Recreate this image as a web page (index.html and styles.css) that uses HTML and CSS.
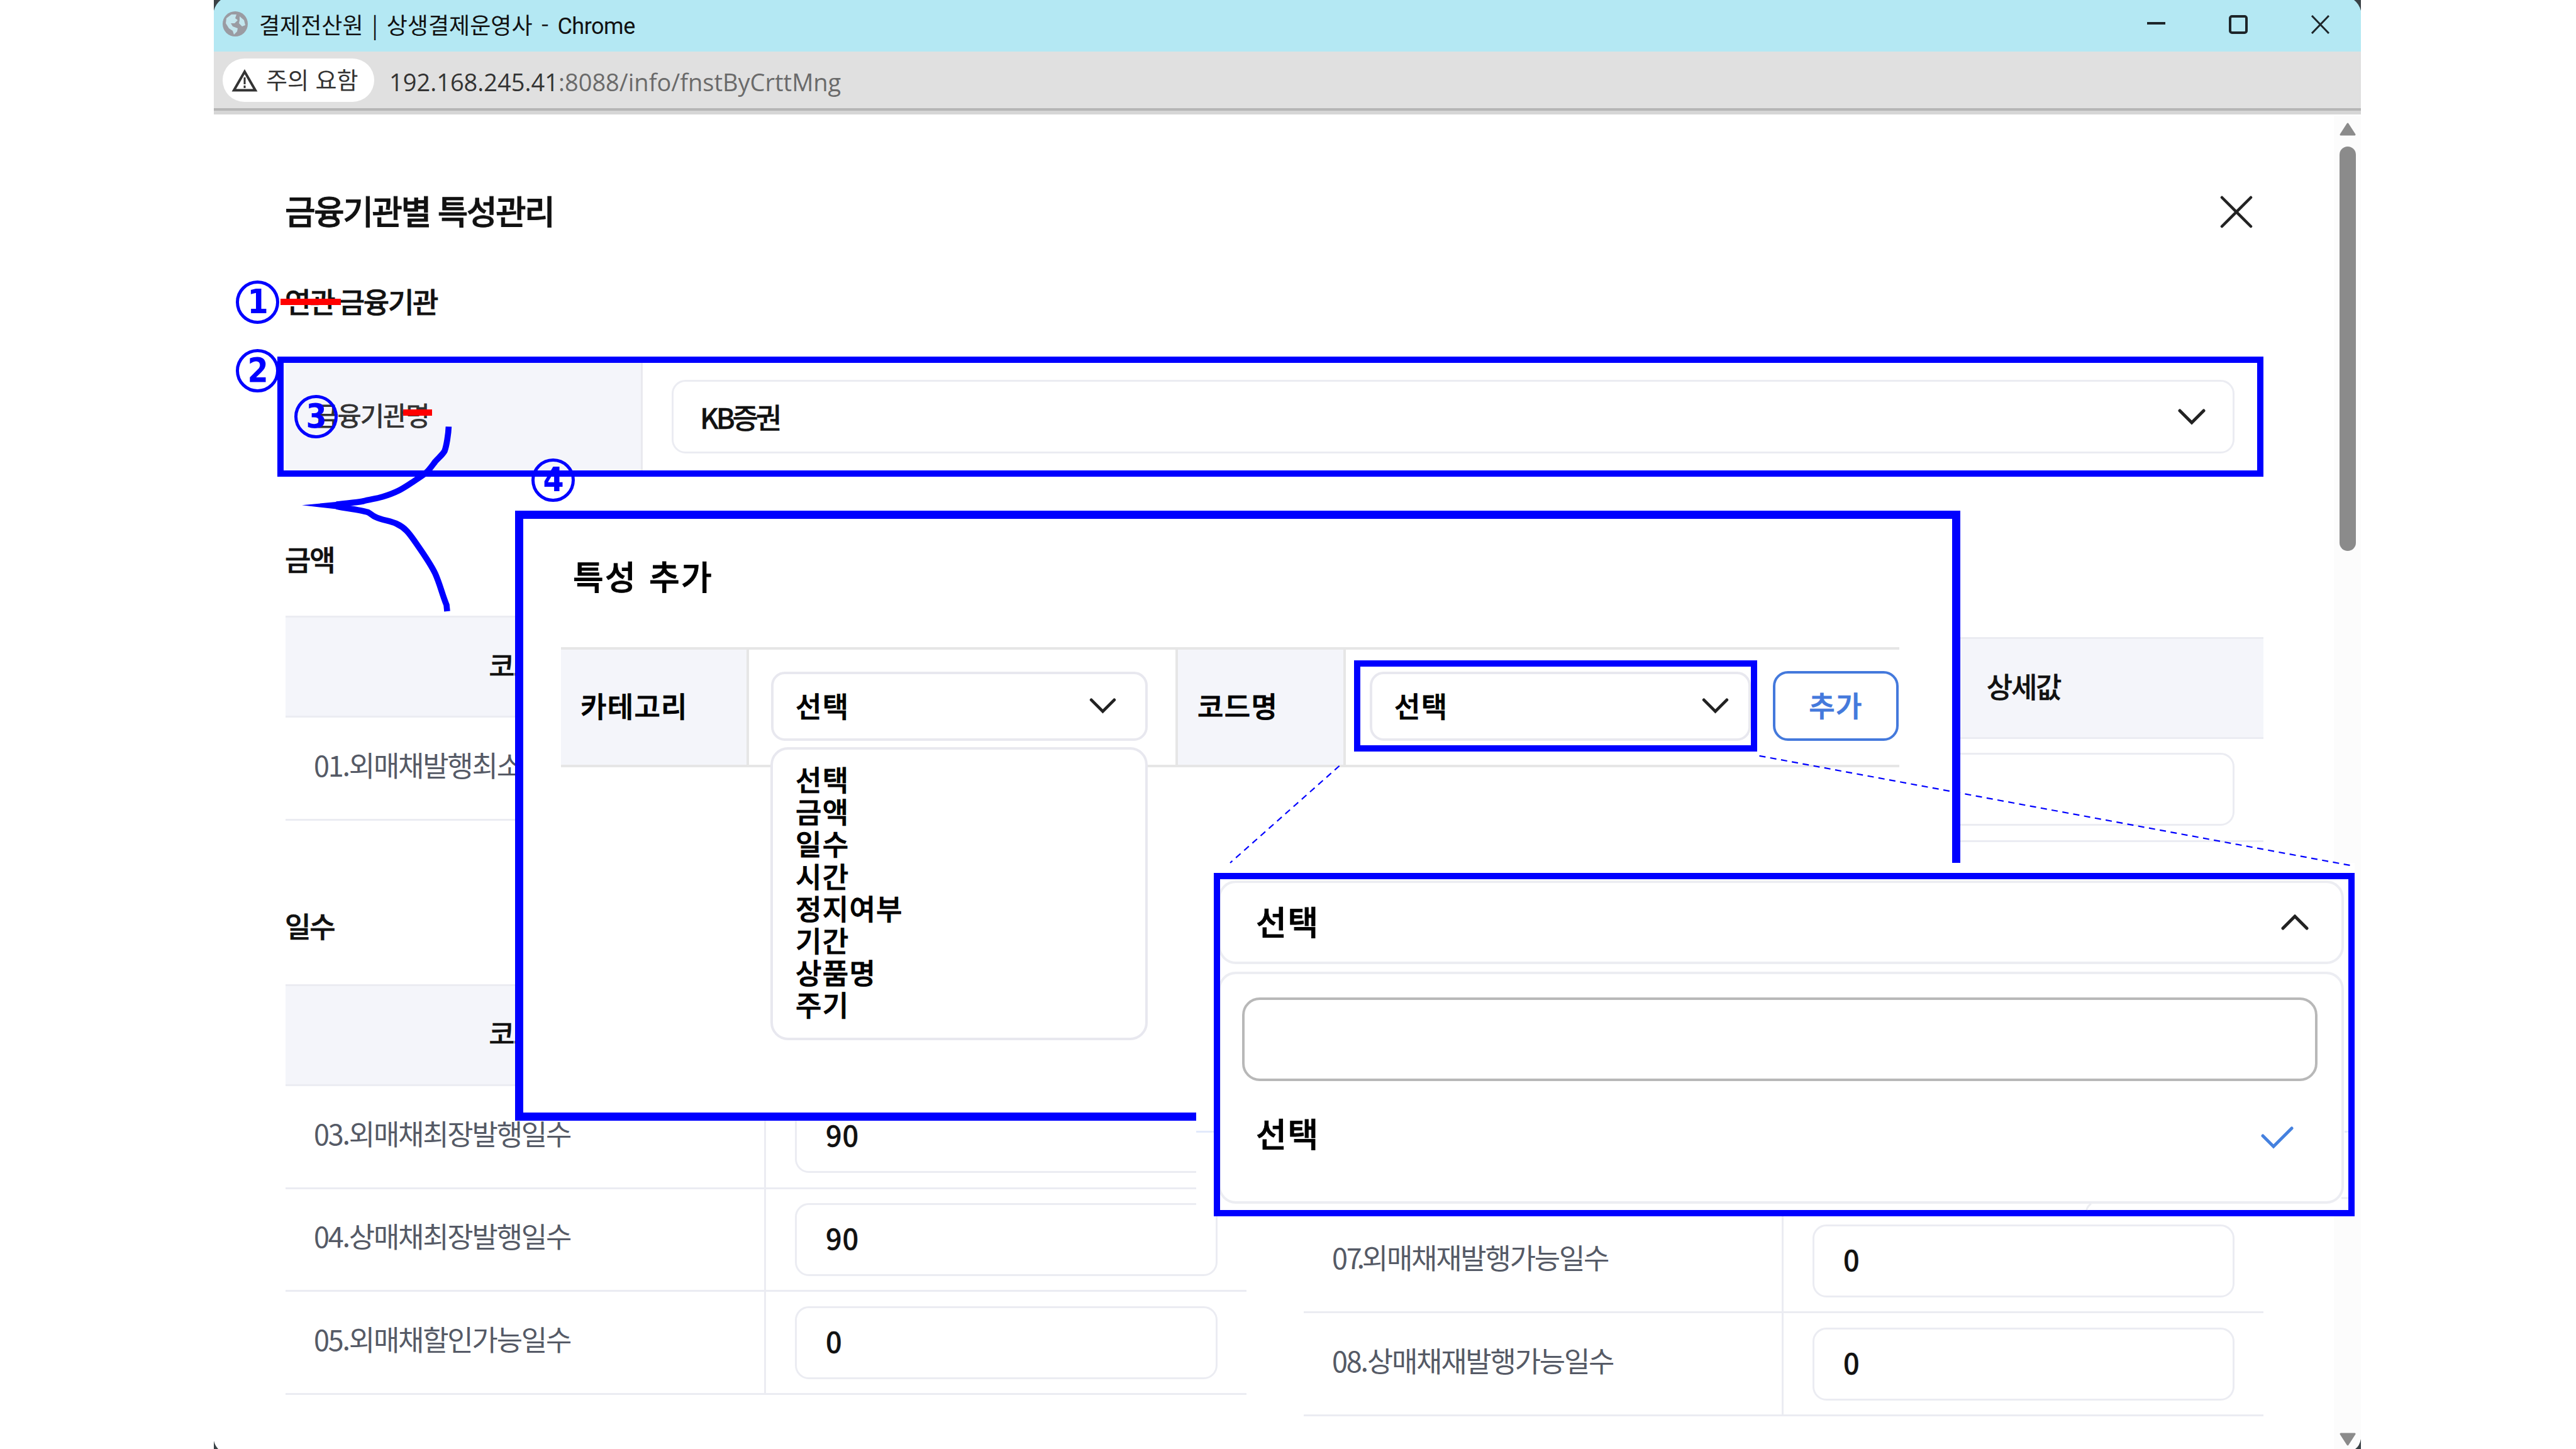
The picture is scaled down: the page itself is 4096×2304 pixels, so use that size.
FILE: index.html
```html
<!DOCTYPE html>
<html lang="ko">
<head>
    <meta charset="UTF-8">
    <meta name="viewport" content="width=device-width, initial-scale=1.0">
    <title>결제전산원 | 상생결제운영사</title>
    <link rel="stylesheet" href="styles.css">
</head>
<body>
    <div class="window">
        <div class="title-bar">
            <svg class="globe" viewBox="0 0 40 40">
                <circle cx="20" cy="20" r="20" fill="#9a9ba2"/>
                <path d="M6 11 L14 5 L22 5 L20 11 L24 14 L19 19 L13 19 L16 24 L24 27 L23 32 L18 37 L16 31 L10 27 L5 19 Z" fill="#c3e6ee"/>
                <path d="M27 8 L34 14 L36 22 L31 24 L26 19 L27 14 Z" fill="#c3e6ee"/>
            </svg>
            <span class="window-title">결제전산원 | 상생결제운영사 - <span class="latin">Chrome</span></span>
            <svg class="window-buttons" viewBox="0 0 290 30" fill="none" stroke="#1d2529" stroke-width="4">
                <path d="M0 13 H29"/>
                <rect x="132" y="2" width="26" height="26" rx="3"/>
                <path d="M262 1 L289 29 M289 1 L262 29" stroke-width="3"/>
            </svg>
        </div>
        <div class="address-bar">
            <div class="warning">
                <svg class="warning-icon" viewBox="0 0 42 37" fill="none" stroke="#333" stroke-width="4">
                    <path d="M21 5 L38 34.500 H4 Z"/>
                    <path d="M21 14 V25 M21 27 V31" stroke-width="3"/>
                </svg>
                <span>주의 요함</span>
            </div>
            <div class="url"><span class="host">192.168.245.41</span>:8088/info/fnstByCrttMng</div>
        </div>

        <div class="viewport">
            <div class="page">
                <div class="page-header">
                    <h1>금융기관별 특성관리</h1>
                    <svg class="close" viewBox="0 0 52 52" stroke="#222" stroke-width="4.500" stroke-linecap="round">
                        <path d="M3 3 L49 49 M49 3 L3 49"/>
                    </svg>
                </div>

                <h2 class="first">연관 금융기관</h2>
                <div class="search-row">
                    <div class="label">금융기관명</div>
                    <div class="field">
                        <div class="select">
                            <span>KB증권</span>
                            <svg class="chevron" viewBox="0 0 44 26" fill="none" stroke="#222" stroke-width="5" stroke-linecap="round"><path d="M3 3 L22 22 L41 3"/></svg>
                        </div>
                    </div>
                </div>

                <h2 class="amount">금액</h2>
                <div class="columns">
                    <div class="table">
                        <div class="row head"><div class="name">코드명</div><div class="value">상세값</div></div>
                        <div class="row"><div class="name">01.외매채발행최소금액</div><div class="value"><div class="input"></div></div></div>
                    </div>
                    <div class="table right">
                        <div class="row head"><div class="name">코드명</div><div class="value">상세값</div></div>
                        <div class="row"><div class="name"></div><div class="value"><div class="input"></div></div></div>
                    </div>
                </div>

                <h2 class="days">일수</h2>
                <div class="columns">
                    <div class="table">
                        <div class="row head"><div class="name">코드명</div><div class="value">상세값</div></div>
                        <div class="row"><div class="name">03.외매채최장발행일수</div><div class="value"><div class="input">90</div></div></div>
                        <div class="row"><div class="name">04.상매채최장발행일수</div><div class="value"><div class="input">90</div></div></div>
                        <div class="row"><div class="name">05.외매채할인가능일수</div><div class="value"><div class="input">0</div></div></div>
                    </div>
                    <div class="table right">
                        <div class="row head"><div class="name">코드명</div><div class="value">상세값</div></div>
                        <div class="row"><div class="name"></div><div class="value"><div class="input"></div></div></div>
                        <div class="row"><div class="name">07<span class="dot">.</span>외매채재발행가능일수</div><div class="value"><div class="input">0</div></div></div>
                        <div class="row"><div class="name">08.상매채재발행가능일수</div><div class="value"><div class="input">0</div></div></div>
                    </div>
                </div>
            </div>

            <div class="scrollbar">
                <svg class="arrow" viewBox="0 0 26 21"><path d="M13 2 L24 19 H2 Z" fill="#8b8b8b" stroke="#8b8b8b" stroke-width="3" stroke-linejoin="round"/></svg>
                <div class="thumb"></div>
                <svg class="arrow down" viewBox="0 0 26 21"><path d="M13 19 L24 2 H2 Z" fill="#8b8b8b" stroke="#8b8b8b" stroke-width="3" stroke-linejoin="round"/></svg>
            </div>
        </div>
    </div>

    <!-- 표시용 박스 -->
    <div class="outline-search"></div>

    <!-- 특성 추가 팝업 -->
    <div class="popup">
        <h3>특성 추가</h3>
        <div class="form-row">
            <div class="form-label">카테고리</div>
            <div class="form-field category">
                <div class="box">
                    <span>선택</span>
                    <svg class="chevron-sm" viewBox="0 0 44 26" fill="none" stroke="#222" stroke-width="5" stroke-linecap="round"><path d="M3 3 L22 22 L41 3"/></svg>
                </div>
                <ul class="options">
                    <li>선택</li>
                    <li>금액</li>
                    <li>일수</li>
                    <li>시간</li>
                    <li>정지여부</li>
                    <li>기간</li>
                    <li>상품명</li>
                    <li>주기</li>
                </ul>
            </div>
            <div class="form-label code">코드명</div>
            <div class="form-field action">
                <div class="outline-code">
                    <div class="box">
                        <span>선택</span>
                        <svg class="chevron-sm" viewBox="0 0 44 26" fill="none" stroke="#222" stroke-width="5" stroke-linecap="round"><path d="M3 3 L22 22 L41 3"/></svg>
                    </div>
                </div>
                <div class="add-button">추가</div>
            </div>
        </div>
    </div>

    <!-- 코드명 펼침 상세 -->
    <div class="detail-back"></div>
    <div class="detail">
        <div class="detail-select">
            <span>선택</span>
            <svg class="chevron" viewBox="0 0 44 26" fill="none" stroke="#222" stroke-width="5" stroke-linecap="round"><path d="M3 22 L22 3 L41 22"/></svg>
        </div>
        <div class="detail-panel">
            <div class="detail-search"></div>
            <div class="detail-option">
                <span>선택</span>
                <svg class="check" viewBox="0 0 52 36" fill="none" stroke="#4581df" stroke-width="5" stroke-linecap="round"><path d="M3 15 L20 32 L49 3"/></svg>
            </div>
        </div>
    </div>

    <svg class="marks" viewBox="0 0 4096 2304" fill="none">
        <!-- 창 모서리 -->
        <path d="M340 0 H351 Q343 6 340 17 Z M3754 0 H3743 Q3751 6 3754 17 Z" fill="#3a4246"/>
        <path d="M340 2291 Q342 2299 347 2304 H340 Z M3754 2288 Q3752 2299 3745 2304 H3754 Z" fill="#3a4246"/>
        <path d="M1902 1799.500 H1930 M3728 1799.500 H3734" stroke="#e2eafb" stroke-width="3"/>
        <path d="M3723 1905 H3734 M3325 1914 Q3319 1918 3318 1924" stroke="#ecedf2" stroke-width="3"/>
        <!-- 취소선 -->
        <path d="M446 480 H542 M641 656 H687" stroke="#f00" stroke-width="10"/>
        <!-- 괄호 -->
        <path d="M713.400 678.400 C713 690 710 709 707 717 C703 724 697 728 692 734 C686 742 682 748 677 752 C671 757 665 760 657 766 C649 771 642 776 634 780 C626 784 618 787 608 790 C598 793 588 794 577 797 C567 799 552 800 535 802" stroke="#00f" stroke-width="9.600"/>
        <path d="M535 805 C552 809 576 811 586 815 C590 817 592 820 597 822 C607 827 620 828 630 832.500 C644 839 650 847 659 860 C668 873 684 895 692 912 C700 930 702 942 710 962 L711 972" stroke="#00f" stroke-width="9.600"/>
        <path d="M480 803.300 L545 797 L565 802.500 L553 804.500 L560 808 L544 810.500 Z" fill="#00f"/>
        <!-- 확대 안내선 -->
        <path d="M2129.700 1217.800 L1956 1372 M2797.500 1201.800 L3739.500 1376.500" stroke="#00f" stroke-width="2.200" stroke-dasharray="10 7.500"/>
    </svg>

    <div class="badge badge-1">1</div>
    <div class="badge badge-2">2</div>
    <div class="badge badge-3">3</div>
    <div class="badge badge-4">4</div>
</body>
</html>
```
FILE: styles.css
```css
* {
    box-sizing: border-box;
}
body {
    position: relative;
    width: 4096px;
    height: 2304px;
    margin: 0;
    overflow: hidden;
    background: #fff;
    color: #111;
    font-family: "Noto Sans CJK KR", "Noto Sans", sans-serif;
    font-size: 45px;
}
h1, h2, h3, ul {
    margin: 0;
    padding: 0;
}
.window {
    display: flex;
    flex-direction: column;
    width: 3414px;
    height: 2304px;
    margin-left: 340px;
}

/* 브라우저 상단 */
.title-bar {
    display: flex;
    align-items: center;
    height: 82px;
    padding: 0 50px 4px 14px;
    background: #b4e8f3;
    font-size: 36px;
}
.globe {
    width: 40px;
    height: 40px;
    margin: 0 18px 2px 0;
}
.window-title {
    flex: 1;
    padding-bottom: 2px;
    word-spacing: 3.6px;
}
.latin {
    font-family: Roboto, sans-serif;
    letter-spacing: -0.5px;
}
.window-buttons {
    width: 290px;
    height: 30px;
}
.address-bar {
    display: flex;
    align-items: center;
    height: 90px;
    padding: 5px 14px;
    background: #e0e0e0;
}
.warning {
    display: flex;
    align-items: center;
    gap: 13px;
    width: 241px;
    height: 69px;
    padding-left: 14px;
    border-radius: 35px;
    background: #fff;
    font-size: 37px;
    color: #333;
}
.warning-icon {
    width: 42px;
    height: 37px;
}
.warning span {
    padding-bottom: 3px;
}
.url {
    margin-left: 24px;
    padding-top: 5px;
    font-family: "Open Sans", sans-serif;
    font-size: 38px;
    color: #6a6a6a;
}
.host {
    color: #333;
}

/* 본문 */
.viewport {
    display: flex;
    flex: 1;
    border-top: 4px solid #b5b5b5;
    box-shadow: inset 0 6px 0 #d6d6d6;
}
.page {
    flex: 1;
    padding: 106px 112px 0 114px;
}
.page-header {
    display: flex;
    align-items: center;
    justify-content: space-between;
    height: 110px;
    padding-right: 17px;
}
h1 {
    padding-bottom: 6px;
    font-size: 53px;
    font-weight: 500;
    letter-spacing: -0.05em;
    text-indent: -1px;
    -webkit-text-stroke: 0.8px;
}
.close {
    width: 52px;
    height: 52px;
}
h2 {
    height: 60px;
    line-height: 56px;
    font-size: 45px;
    font-weight: 500;
    letter-spacing: -0.05em;
    word-spacing: -3px;
    text-indent: -1px;
    -webkit-text-stroke: 0.7px;
}
.first {
    margin-top: 59px;
}
.search-row {
    display: flex;
    height: 187px;
    margin-top: 58px;
}
.label {
    display: flex;
    align-items: center;
    width: 568px;
    padding: 0 0 9px 46px;
    border-right: 3px solid #e9e9ef;
    background: #f4f5fa;
    color: #333;
    font-size: 42px;
    font-weight: 500;
    letter-spacing: -2.4px;
}
.field {
    display: flex;
    flex: 1;
    align-items: center;
    padding: 0 46px;
}
.select {
    display: flex;
    flex: 1;
    align-items: center;
    justify-content: space-between;
    height: 117px;
    padding: 0 43px 0 42px;
    border: 3px solid #ebecf2;
    border-radius: 22px;
    font-weight: 500;
    letter-spacing: -4.2px;
    -webkit-text-stroke: 0.4px;
}
.chevron {
    width: 44px;
    height: 26px;
}
.amount {
    margin-top: 105px;
}
.days {
    margin-top: 105px;
}
.columns {
    display: flex;
    gap: 91px;
    margin-top: 58px;
}
.days + .columns {
    margin-top: 61px;
}
.table {
    width: 1528px;
    border-top: 3px solid #ebecf2;
}
.table.right {
    width: 1526px;
    margin-top: 34px;
}
.row {
    display: flex;
    height: 163.8px;
    border-bottom: 3px solid #ebecf2;
}
.name {
    display: flex;
    align-items: center;
    width: 50%;
    padding: 0 0 12px 45px;
    border-right: 3px solid #ebecf2;
    color: #555a66;
    letter-spacing: -0.05em;
}
.dot {
    margin: 0 -2px 0 -6px;
}
.value {
    display: flex;
    align-items: center;
    width: 50%;
    padding: 0 46px;
}
.head {
    height: 159px;
    background: #f4f5fa;
}
.head .name, .head .value {
    justify-content: center;
    padding: 0 0 8px;
    border: none;
    color: #111;
    font-weight: 500;
    letter-spacing: -0.05em;
    -webkit-text-stroke: 0.4px;
}
.input {
    flex: 1;
    height: 116px;
    padding-left: 46px;
    border: 3px solid #ebecf2;
    border-radius: 22px;
    line-height: 104px;
    font-weight: 500;
    letter-spacing: 0.8px;
    -webkit-text-stroke: 0.4px;
}
.scrollbar {
    display: flex;
    flex-direction: column;
    align-items: center;
    width: 43px;
    margin-top: 8px;
    padding: 11px 6px 5px 7px;
    background: #fcfcfc;
}
.arrow {
    width: 26px;
    height: 21px;
}
.thumb {
    width: 26px;
    height: 643px;
    margin-top: 17px;
    border-radius: 13px;
    background: #8b8b8b;
}
.down {
    margin-top: auto;
}

/* 팝업 */
.outline-search {
    position: absolute;
    left: 441px;
    top: 567px;
    width: 3158px;
    height: 191px;
    border: 10px solid #00f;
}
.popup {
    position: absolute;
    left: 819px;
    top: 812px;
    width: 2298px;
    height: 970px;
    padding: 0 84px 0 60px;
    border: 13px solid #00f;
    background: #fff;
    color: #000;
    font-weight: 500;
    letter-spacing: 1.3px;
    -webkit-text-stroke: 0.9px;
}
h3 {
    height: 204px;
    padding-left: 19px;
    line-height: 181px;
    font-size: 53px;
    font-weight: 500;
    letter-spacing: 2.2px;
    word-spacing: 2px;
}
.form-row {
    display: flex;
    width: 2128px;
    height: 191px;
    border-top: 4px solid #e6e6e6;
    border-bottom: 4px solid #e6e6e6;
}
.form-label {
    display: flex;
    align-items: center;
    width: 299px;
    padding: 0 0 6px 31px;
    border-right: 4px solid #e6e6e6;
    background: #f4f5fa;
}
.code {
    width: 271px;
    border-left: 4px solid #e6e6e6;
}
.form-field {
    position: relative;
    display: flex;
    align-items: center;
    padding-bottom: 4px;
}
.category {
    width: 678px;
    padding: 0 44px 4px 35px;
}
.box {
    display: flex;
    flex: 1;
    align-items: center;
    justify-content: space-between;
    height: 110px;
    padding: 0 46px 2px 35px;
    border: 4px solid #e8e8ef;
    border-radius: 22px;
}
.chevron-sm {
    width: 43px;
    height: 25px;
    margin-top: 2px;
}
.options {
    position: absolute;
    left: 34px;
    top: 155px;
    width: 600px;
    height: 466px;
    padding: 21px 36px;
    border: 4px solid #e8e8ef;
    border-radius: 28px;
    background: #fff;
    list-style: none;
    line-height: 51.2px;
}
.action {
    flex: 1;
    padding-left: 13px;
    gap: 25px;
}
.outline-code {
    display: flex;
    align-items: center;
    width: 641px;
    height: 145px;
    padding: 0 0 0 15px;
    border: 10px solid #00f;
}
.outline-code .box {
    padding-right: 31px;
}
.add-button {
    display: flex;
    align-items: center;
    justify-content: center;
    width: 200px;
    height: 111px;
    padding-bottom: 4px;
    border: 4px solid #4479dc;
    border-radius: 24px;
    color: #4479dc;
}

/* 펼침 상세 */
.detail-back {
    position: absolute;
    left: 1902px;
    top: 1372px;
    width: 1842px;
    height: 560px;
    background: #fff;
}
.detail {
    position: absolute;
    left: 1930px;
    top: 1388px;
    width: 1814px;
    height: 546px;
    padding: 2px 7px 0 0;
    overflow: hidden;
    border: 10px solid #00f;
    background: #fff;
    color: #000;
    font-size: 53px;
    font-weight: 500;
    letter-spacing: 1.8px;
    -webkit-text-stroke: 1px;
}
.detail-select, .detail-panel {
    margin-left: -3px;
    border: 4px solid #ecedf2;
    border-radius: 28px;
}
.detail-select {
    display: flex;
    align-items: center;
    justify-content: space-between;
    height: 133px;
    padding: 0 52px 0 56px;
}
.detail-select span {
    padding-bottom: 5px;
}
.detail-panel {
    height: 369px;
    margin-top: 12px;
    padding: 37px 38px 0 34px;
}
.detail-search {
    height: 133px;
    border: 4px solid #b8b8b8;
    border-radius: 28px;
}
.detail-option {
    display: flex;
    align-items: center;
    justify-content: space-between;
    height: 172px;
    padding: 0 38px 0 22px;
}
.detail-option span {
    padding-bottom: 8px;
}
.check {
    width: 52px;
    height: 36px;
    margin-top: 7px;
}

/* 주석 표시 */
.marks {
    position: absolute;
    left: 0;
    top: 0;
    width: 4096px;
    height: 2304px;
}
.badge {
    position: absolute;
    width: 69px;
    height: 69px;
    padding-left: 1px;
    border: 5px solid #00f;
    border-radius: 50%;
    line-height: 57px;
    text-align: center;
    color: #00f;
    font-family: "DejaVu Sans Condensed", "DejaVu Sans", sans-serif;
    font-size: 53px;
    font-stretch: condensed;
    font-weight: 700;
}
.badge-1 {
    left: 375px;
    top: 446px;
}
.badge-2 {
    left: 375px;
    top: 555px;
}
.badge-3 {
    left: 468px;
    top: 628px;
}
.badge-4 {
    left: 845px;
    top: 729px;
}
```
